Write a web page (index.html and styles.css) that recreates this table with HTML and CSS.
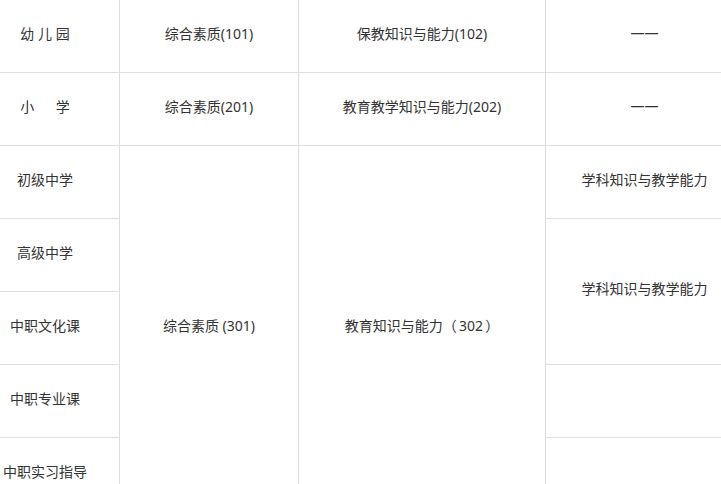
FILE: index.html
```html
<!DOCTYPE html>
<html lang="zh-CN">
<head>
<meta charset="utf-8">
<title>考试科目</title>
<link rel="stylesheet" href="styles.css">
</head>
<body>
<div class="page">
<table class="exam">
<colgroup>
<col class="c1"><col class="c2"><col class="c3"><col class="c4">
</colgroup>
<tbody>
<tr><td>幼 儿 园</td><td>综合素质(101)</td><td>保教知识与能力(102)</td><td>——</td></tr>
<tr><td>小&emsp;&nbsp;&nbsp;学</td><td>综合素质(201)</td><td>教育教学知识与能力(202)</td><td>——</td></tr>
<tr><td>初级中学</td><td rowspan="5">综合素质 (301)</td><td rowspan="5">教育知识与能力（&thinsp;302&thinsp;）</td><td>学科知识与教学能力</td></tr>
<tr><td>高级中学</td><td rowspan="2">学科知识与教学能力</td></tr>
<tr><td>中职文化课</td></tr>
<tr><td>中职专业课</td><td></td></tr>
<tr><td>中职实习指导</td><td></td></tr>
</tbody>
</table>
</div>
</body>
</html>
```
FILE: styles.css
```css
html, body {
  margin: 0;
  padding: 0;
  background: #fff;
}
.page {
  width: 721px;
  height: 484px;
  overflow: hidden;
}
.exam {
  border-collapse: collapse;
  table-layout: fixed;
  width: 773px;
  margin: -1px 0 0 -30px;
  font-family: "Noto Sans", "Noto Sans CJK SC", sans-serif;
  font-size: 14px;
  color: #333;
}
.c1 { width: 149px; }
.c2 { width: 179px; }
.c3 { width: 247px; }
.c4 { width: 198px; }
.exam td {
  border: 1px solid #ddd;
  height: 73px;
  padding: 0 0 7px;
  box-sizing: border-box;
  text-align: center;
  vertical-align: middle;
  white-space: nowrap;
}
```
